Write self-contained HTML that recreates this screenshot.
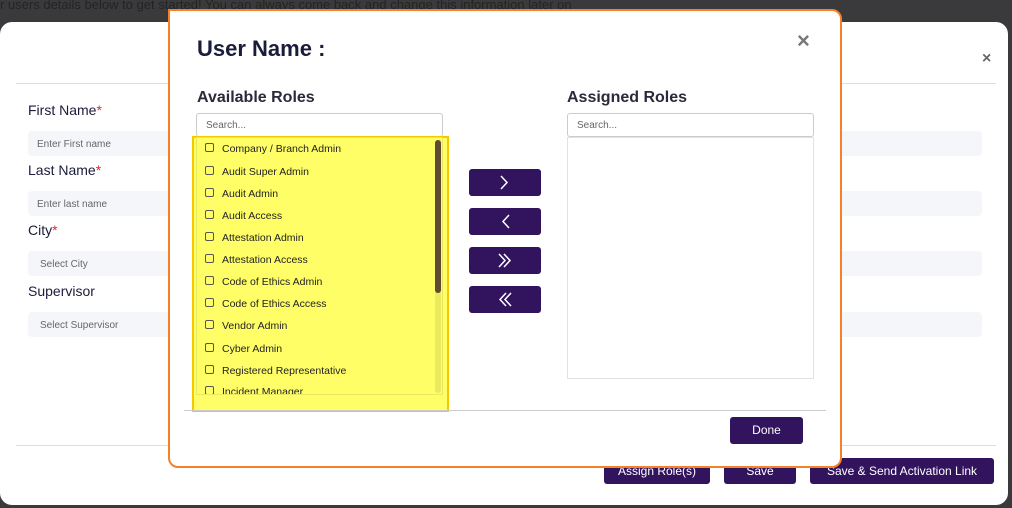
<!DOCTYPE html>
<html><head><style>
*{box-sizing:border-box;margin:0;padding:0}
body{width:1012px;height:508px;overflow:hidden;background:#3a3a3c;font-family:"Liberation Sans",sans-serif;position:relative}
.a{position:absolute}
.top{left:0;top:-3px;font-size:13px;color:#1a1a1a;opacity:.7;white-space:nowrap}
.outer{left:0;top:22px;width:1008px;height:483px;background:#fff;border-radius:12px}
.lbl{font-size:14px;color:#1b1b3a}
.lbl b{color:#e0263b;font-weight:normal}
.inp{left:28px;width:954px;height:25px;background:#f5f6fa;border-radius:4px;font-size:10px;color:#666;padding:8px 0 0 9px}
.hr{height:1px;background:#ddd}
.btn{background:#32135e;color:#fff;border-radius:3px;font-size:12px;text-align:center;line-height:26px}
.modal{left:168px;top:9px;width:674px;height:459px;border:2px solid #f5822a;background:#fff;border-radius:0 10px 10px 10px}
.h{font-size:16px;font-weight:bold;color:#2a2a3a}
.srch{height:24px;border:1px solid #ccc;border-radius:3px;font-size:10px;color:#666;padding:6px 0 0 9px}
.item{left:205px;font-size:10.5px;color:#222;white-space:nowrap}
.item i{display:inline-block;width:9px;height:9px;border:1px solid #555;border-radius:2px;margin-right:8px;vertical-align:0px}
.arr{left:469px;width:72px;height:27px;background:#32135e;border-radius:3px}
</style></head><body>
<div class="a top">r users details below to get started! You can always come back and change this information later on</div>
<div class="a outer"></div>
<div class="a hr" style="left:16px;top:83px;width:980px"></div>
<div class="a" style="left:982px;top:50px;font-size:16px;color:#666;font-weight:bold">×</div>
<div class="a lbl" style="left:28px;top:102px">First Name<b>*</b></div>
<div class="a inp" style="top:131px">Enter First name</div>
<div class="a lbl" style="left:28px;top:162px">Last Name<b>*</b></div>
<div class="a inp" style="top:191px">Enter last name</div>
<div class="a lbl" style="left:28px;top:222px">City<b>*</b></div>
<div class="a inp" style="top:251px;padding-left:12px">Select City</div>
<div class="a lbl" style="left:28px;top:283px">Supervisor</div>
<div class="a inp" style="top:312px;padding-left:12px">Select Supervisor</div>
<div class="a hr" style="left:16px;top:445px;width:980px"></div>
<div class="a btn" style="left:604px;top:458px;width:106px">Assign Role(s)</div>
<div class="a btn" style="left:724px;top:458px;width:72px">Save</div>
<div class="a btn" style="left:810px;top:458px;width:184px">Save &amp; Send Activation Link</div>

<div class="a modal"></div>
<div class="a" style="left:197px;top:36px;font-size:22px;font-weight:bold;color:#1b1b3a">User Name :</div>
<div class="a" style="left:797px;top:28px;font-size:22px;font-weight:bold;color:#777">×</div>
<div class="a h" style="left:197px;top:89px">Available Roles</div>
<div class="a h" style="left:567px;top:89px">Assigned Roles</div>
<div class="a srch" style="left:196px;top:113px;width:247px">Search...</div>
<div class="a srch" style="left:567px;top:113px;width:247px">Search...</div>
<div class="a" style="left:567px;top:137px;width:247px;height:242px;border:1px solid #e2e2e2"></div>
<div class="a" style="left:192px;top:136px;width:257px;height:276px;background:#fffe66;border:2px solid #f5c800"></div>
<div class="a" style="left:196px;top:137px;width:247px;height:258px;border:1px solid #e8e860"></div>
<div class="a" style="left:435px;top:140px;width:6px;height:253px;background:#eaea5c;border-radius:3px"></div>
<div class="a" style="left:435px;top:140px;width:6px;height:153px;background:#5e4b30;border-radius:3px"></div>
<div class="a item" style="top:143px"><i></i>Company / Branch Admin</div>
<div class="a item" style="top:166px"><i></i>Audit Super Admin</div>
<div class="a item" style="top:188px"><i></i>Audit Admin</div>
<div class="a item" style="top:210px"><i></i>Audit Access</div>
<div class="a item" style="top:232px"><i></i>Attestation Admin</div>
<div class="a item" style="top:254px"><i></i>Attestation Access</div>
<div class="a item" style="top:276px"><i></i>Code of Ethics Admin</div>
<div class="a item" style="top:298px"><i></i>Code of Ethics Access</div>
<div class="a item" style="top:320px"><i></i>Vendor Admin</div>
<div class="a item" style="top:343px"><i></i>Cyber Admin</div>
<div class="a item" style="top:365px"><i></i>Registered Representative</div>
<div class="a" style="left:196px;top:384px;width:238px;height:10px;overflow:hidden"><div class="a item" style="left:9px;top:2px"><i></i>Incident Manager</div></div>

<div class="a arr" style="top:169px"><svg width="72" height="27"><path d="M32 7l6 6.5-6 6.5" stroke="#fff" fill="none" stroke-width="1.5"/></svg></div>
<div class="a arr" style="top:208px"><svg width="72" height="27"><path d="M40 7l-6 6.5 6 6.5" stroke="#fff" fill="none" stroke-width="1.5"/></svg></div>
<div class="a arr" style="top:247px"><svg width="72" height="27"><path d="M30 7l6 6.5-6 6.5M35 7l6 6.5-6 6.5" stroke="#fff" fill="none" stroke-width="1.5"/></svg></div>
<div class="a arr" style="top:286px"><svg width="72" height="27"><path d="M37 7l-6 6.5 6 6.5M42 7l-6 6.5 6 6.5" stroke="#fff" fill="none" stroke-width="1.5"/></svg></div>
<div class="a hr" style="left:184px;top:410px;width:642px;background:#ccc"></div>
<div class="a btn" style="left:730px;top:417px;width:73px;height:27px;line-height:27px">Done</div>
</body></html>
